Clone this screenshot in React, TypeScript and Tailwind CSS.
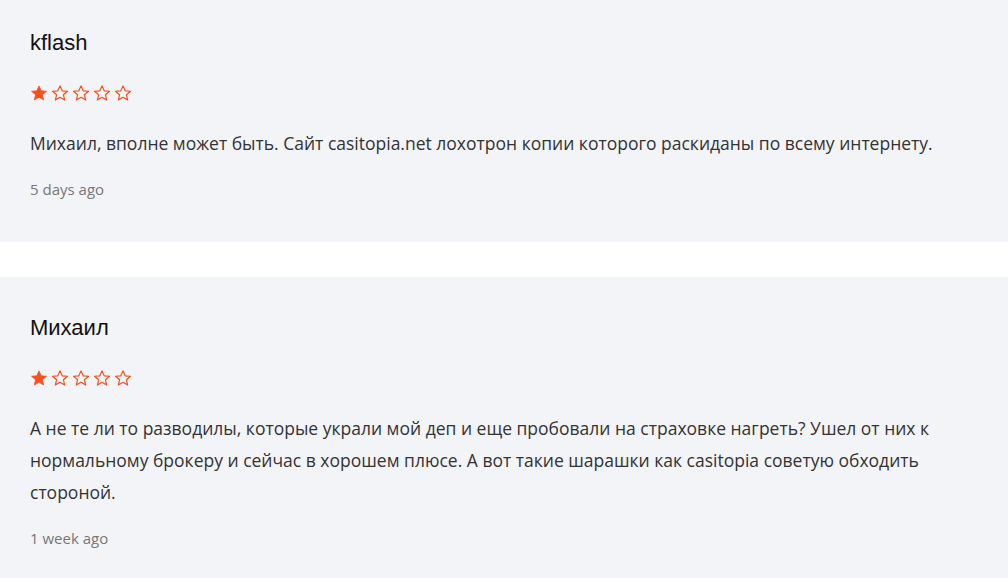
const reviews = [
  {
    name: 'kflash',
    rating: 1,
    text: 'Михаил, вполне может быть. Сайт casitopia.net лохотрон копии которого раскиданы по всему интернету.',
    date: '5 days ago',
  },
  {
    name: 'Михаил',
    rating: 1,
    text: 'А не те ли то разводилы, которые украли мой деп и еще пробовали на страховке нагреть? Ушел от них к нормальному брокеру и сейчас в хорошем плюсе. А вот такие шарашки как casitopia советую обходить стороной.',
    date: '1 week ago',
  },
];

const Star = ({ filled }: { filled: boolean }) => (
  <svg width="18" height="18" viewBox="0 0 24 24" className="block">
    <path
      d="M12 2.5l2.9 6.6 7.1.6-5.4 4.7 1.6 7-6.2-3.7-6.2 3.7 1.6-7L2 9.7l7.1-.6z"
      fill={filled ? '#f4511e' : 'none'}
      stroke="#f4511e"
      strokeWidth={filled ? 1 : 1.6}
      strokeLinejoin="round"
    />
  </svg>
);

const ReviewCard = ({ review }: { review: (typeof reviews)[number] }) => (
  <div className="bg-[#f3f4f8] px-[30px] pt-[38px] pb-[42px]">
    <h3 className="text-[22px] leading-[26px] text-[#111] font-['Liberation_Sans',Arial,sans-serif]">{review.name}</h3>
    <div className="mt-[28px] flex gap-[3px]">
      {[0, 1, 2, 3, 4].map((i) => (
        <Star key={i} filled={i < review.rating} />
      ))}
    </div>
    <p className="mt-[25px] text-[17.5px] leading-[32px] text-[#333] font-['Open_Sans',sans-serif]">{review.text}</p>
    <p className="mt-[19px] text-[15px] leading-[22px] text-[#777] font-['Open_Sans',sans-serif]">{review.date}</p>
  </div>
);

export default function App() {
  return (
    <div className="h-[578px] overflow-hidden bg-white">
      <div className="-mt-[8px] flex flex-col gap-[35px]">
        {reviews.map((r) => (
          <ReviewCard key={r.name} review={r} />
        ))}
      </div>
    </div>
  );
}
